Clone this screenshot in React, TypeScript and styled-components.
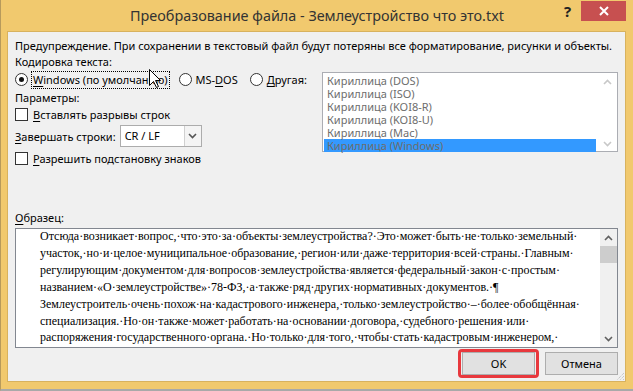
import React from 'react';
import styled, { createGlobalStyle } from 'styled-components';

const UI = `"Noto Sans", "Open Sans", sans-serif`;

const Global = createGlobalStyle`
  html, body { margin: 0; padding: 0; }
  body { width: 633px; height: 391px; overflow: hidden; background: #ffffff; }
`;

const Window = styled.div`
  position: relative;
  width: 633px;
  height: 391px;
  box-sizing: border-box;
  background: #f1c96e;
  border-left: 1px solid #b79a5c;
  border-bottom: 2px solid #a9a9a9;
  display: flex;
  flex-direction: column;
  font-family: ${UI};
  font-size: 11px;
  color: #000;
`;

const TitleBar = styled.div`
  height: 31px;
  flex: none;
  display: grid;
  grid-template-columns: 1fr auto 1fr;
  align-items: start;
`;

const Title = styled.div`
  grid-column: 2;
  font-size: 14.4px;
  line-height: 31px;
  color: #333;
  white-space: nowrap;
`;

const Controls = styled.div`
  grid-column: 3;
  justify-self: end;
  display: flex;
  align-items: flex-start;
  margin-right: 7px;
  margin-top: 1px;
`;

const HelpButton = styled.div`
  width: 27px;
  height: 20px;
  display: flex;
  align-items: center;
  justify-content: center;
  font-size: 15px;
  font-weight: 700;
  color: #222;
`;

const CloseButton = styled.div`
  width: 45px;
  height: 20px;
  background: #c75050;
  display: flex;
  align-items: center;
  justify-content: center;
`;

const Body = styled.div`
  position: relative;
  flex: 1;
  margin: 0 7px 7px 6px;
  border: 1px solid #d8b25e;
  background: #f0f0f0;
  padding: 6px 7px 0 7px;
  display: flex;
  flex-direction: column;
`;

const Line = styled.div<{ $top?: number }>`
  height: 16px;
  line-height: 16px;
  margin-top: ${(p) => p.$top ?? 0}px;
  white-space: nowrap;
`;

const U = styled.span`
  text-decoration: underline;
  text-underline-offset: 2px;
`;

const TopRow = styled.div`
  display: flex;
  align-items: flex-start;
`;

const LeftCol = styled.div`
  width: 307px;
  flex: none;
  display: flex;
  flex-direction: column;
`;

const RadioRow = styled.div`
  display: flex;
  align-items: center;
  height: 17px;
  margin-top: 1px;
  white-space: nowrap;
`;

const RadioOption = styled.div<{ $gap?: number }>`
  display: flex;
  align-items: center;
  margin-right: ${(p) => p.$gap ?? 0}px;
`;

const RadioCircle = styled.span<{ $checked?: boolean }>`
  width: 11px;
  height: 11px;
  flex: none;
  border: 1px solid #333;
  border-radius: 50%;
  background: #fff;
  display: flex;
  align-items: center;
  justify-content: center;
  margin-right: 4px;
  &::after {
    content: '';
    width: 5px;
    height: 5px;
    border-radius: 50%;
    background: ${(p) => (p.$checked ? '#111' : 'transparent')};
  }
`;

const FocusLabel = styled.span`
  outline: 1px dotted #000;
  outline-offset: 0px;
  padding: 0 1px;
  line-height: 16px;
`;

const CheckRow = styled.div<{ $top?: number }>`
  display: flex;
  align-items: center;
  height: 16px;
  margin-top: ${(p) => p.$top ?? 0}px;
  white-space: nowrap;
`;

const CheckBox = styled.span`
  width: 11px;
  height: 11px;
  flex: none;
  border: 1px solid #333;
  background: #fff;
  margin-right: 5px;
`;

const SelectRow = styled.div`
  display: flex;
  align-items: center;
  height: 22px;
  margin-top: 3px;
  white-space: nowrap;
`;

const SelectBox = styled.div`
  margin-left: 4px;
  width: 80px;
  height: 20px;
  border: 1px solid #acacac;
  background: #fff;
  display: flex;
`;

const SelectValue = styled.div`
  flex: 1;
  padding-left: 4px;
  line-height: 20px;
`;

const SelectArrow = styled.div`
  width: 16px;
  border-left: 1px solid #d0d0d0;
  background: #f4f4f4;
  display: flex;
  align-items: center;
  justify-content: center;
`;

const ListBox = styled.div`
  margin-top: 18px;
  width: 300px;
  height: 80px;
  box-sizing: border-box;
  border: 1px solid #abadb3;
  background: #fff;
  display: flex;
`;

const ListItems = styled.div`
  flex: 1;
  padding: 0 1px;
  padding-top: 1px;
`;

const ListItem = styled.div<{ $selected?: boolean }>`
  height: 13px;
  line-height: 13px;
  padding-left: 3px;
  color: #6d6d6d;
  background: ${(p) => (p.$selected ? '#3399ff' : 'transparent')};
  white-space: nowrap;
`;

const ListScroll = styled.div`
  width: 20px;
  display: flex;
  flex-direction: column;
  justify-content: space-between;
  align-items: center;
  padding: 6px 0 4px;
`;

const SampleLabel = styled(Line)``;

const SampleBox = styled.div`
  margin-top: 2px;
  height: 120px;
  box-sizing: border-box;
  border: 1px solid #828790;
  background: #fff;
  display: flex;
  overflow: hidden;
`;

const SampleText = styled.div`
  flex: 1;
  padding-left: 24px;
  font-family: "Liberation Serif", "Times New Roman", serif;
  font-size: 12px;
  line-height: 16.9px;
  white-space: pre;
  overflow: hidden;
  margin-top: -1px;
`;

const Scrollbar = styled.div`
  width: 17px;
  flex: none;
  background: #f0f0f0;
  display: flex;
  flex-direction: column;
  align-items: stretch;
`;

const ScrollArrow = styled.div`
  height: 17px;
  display: flex;
  align-items: center;
  justify-content: center;
`;

const ScrollTrack = styled.div`
  flex: 1;
  display: flex;
  flex-direction: column;
`;

const ScrollThumb = styled.div`
  height: 17px;
  background: #cdcdcd;
`;

const ButtonRow = styled.div`
  margin-top: 4px;
  display: flex;
  justify-content: flex-end;
  gap: 10px;
`;

const DialogButton = styled.div<{ $marked?: boolean }>`
  position: relative;
  width: 71px;
  height: 21px;
  border: 1px solid #adadad;
  background: #e1e1e1;
  display: flex;
  align-items: center;
  justify-content: center;
  &::after {
    content: '';
    display: ${(p) => (p.$marked ? 'block' : 'none')};
    position: absolute;
    inset: -4px -5px;
    border: 3px solid #e8383d;
    border-radius: 4px;
  }
`;

const Grip = styled.svg`
  position: absolute;
  right: 0;
  bottom: 0;
`;

const Cursor = styled.svg`
  position: absolute;
  left: 141px;
  top: 37px;
`;

const Chevron = ({ up, color }: { up?: boolean; color: string }) => (
  <svg width="9" height="6" viewBox="0 0 9 6">
    <path
      d={up ? 'M1 5 L4.5 1.5 L8 5' : 'M1 1 L4.5 4.5 L8 1'}
      fill="none"
      stroke={color}
      strokeWidth="1.6"
    />
  </svg>
);

const sampleLines = [
  'Отсюда·возникает·вопрос,·что·это·за·объекты·землеустройства?·Это·может·быть·не·только·земельный·',
  'участок,·но·и·целое·муниципальное·образование,·регион·или·даже·территория·всей·страны.·Главным·',
  'регулирующим·документом·для·вопросов·землеустройства·является·федеральный·закон·с·простым·',
  'названием·«О·землеустройстве»·78-ФЗ,·а·также·ряд·других·нормативных·документов.·¶',
  'Землеустроитель·очень·похож·на·кадастрового·инженера,·только·землеустройство·–·более·обобщённая·',
  'специализация.·Но·он·также·может·работать·на·основании·договора,·судебного·решения·или·',
  'распоряжения·государственного·органа.·Но·только·для·того,·чтобы·стать·кадастровым·инженером,·',
  'необходимо·обучение·и·сдача·квалификационного·экзамена,·а·землеустроителем·может·стать·любой·',
];

const encodings = [
  'Кириллица (DOS)',
  'Кириллица (ISO)',
  'Кириллица (KOI8-R)',
  'Кириллица (KOI8-U)',
  'Кириллица (Mac)',
  'Кириллица (Windows)',
];

export default function App() {
  return (
    <>
      <Global />
      <Window>
        <TitleBar>
          <Title>Преобразование файла - Землеустройство что это.txt</Title>
          <Controls>
            <HelpButton>?</HelpButton>
            <CloseButton>
              <svg width="10" height="10" viewBox="0 0 10 10">
                <path d="M1 1 L9 9 M9 1 L1 9" stroke="#fff" strokeWidth="2" />
              </svg>
            </CloseButton>
          </Controls>
        </TitleBar>
        <Body>
          <Line>
            Предупреждение. При сохранении в текстовый файл будут потеряны все форматирование, рисунки и объекты.
          </Line>
          <TopRow>
            <LeftCol>
              <Line>Кодировка текста:</Line>
              <RadioRow>
                <RadioOption $gap={10}>
                  <RadioCircle $checked />
                  <FocusLabel>
                    <U>W</U>indows (по умолчанию)
                  </FocusLabel>
                </RadioOption>
                <RadioOption $gap={12}>
                  <RadioCircle />
                  <span>
                    MS-<U>D</U>OS
                  </span>
                </RadioOption>
                <RadioOption>
                  <RadioCircle />
                  <span>
                    <U>Д</U>ругая:
                  </span>
                </RadioOption>
              </RadioRow>
              <Line $top={2}>Параметры:</Line>
              <CheckRow>
                <CheckBox />
                <span>
                  <U>В</U>ставлять разрывы строк
                </span>
              </CheckRow>
              <SelectRow>
                <span>
                  <U>З</U>авершать строки:
                </span>
                <SelectBox>
                  <SelectValue>CR / LF</SelectValue>
                  <SelectArrow>
                    <Chevron color="#555" />
                  </SelectArrow>
                </SelectBox>
              </SelectRow>
              <CheckRow $top={3}>
                <CheckBox />
                <span>
                  <U>Р</U>азрешить подстановку знаков
                </span>
              </CheckRow>
            </LeftCol>
            <ListBox>
              <ListItems>
                {encodings.map((e, i) => (
                  <ListItem key={e} $selected={i === encodings.length - 1}>
                    {e}
                  </ListItem>
                ))}
              </ListItems>
              <ListScroll>
                <Chevron up color="#c8c8c8" />
                <Chevron color="#c8c8c8" />
              </ListScroll>
            </ListBox>
          </TopRow>
          <SampleLabel $top={44}>
            <U>О</U>бразец:
          </SampleLabel>
          <SampleBox>
            <SampleText>
              {sampleLines.map((l, i) => (
                <div key={i}>{l}</div>
              ))}
            </SampleText>
            <Scrollbar>
              <ScrollArrow>
                <Chevron up color="#606060" />
              </ScrollArrow>
              <ScrollTrack>
                <ScrollThumb />
              </ScrollTrack>
              <ScrollArrow>
                <Chevron color="#606060" />
              </ScrollArrow>
            </Scrollbar>
          </SampleBox>
          <ButtonRow>
            <DialogButton $marked>OK</DialogButton>
            <DialogButton>Отмена</DialogButton>
          </ButtonRow>
          <Grip width="10" height="10" viewBox="0 0 10 10">
            <path d="M9 2 L2 9 M9 5 L5 9 M9 8 L8 9" stroke="#b5b5b5" strokeWidth="1" strokeDasharray="1 1" />
          </Grip>
          <Cursor width="13" height="20" viewBox="0 0 13 20">
            <path
              d="M0.5 0.5 L0.5 16.5 L4.5 12.5 L7.5 18.5 L9.5 17.5 L6.5 11.5 L11.5 11.5 Z"
              fill="#fff"
              stroke="#000"
              strokeWidth="1"
            />
          </Cursor>
        </Body>
      </Window>
    </>
  );
}
